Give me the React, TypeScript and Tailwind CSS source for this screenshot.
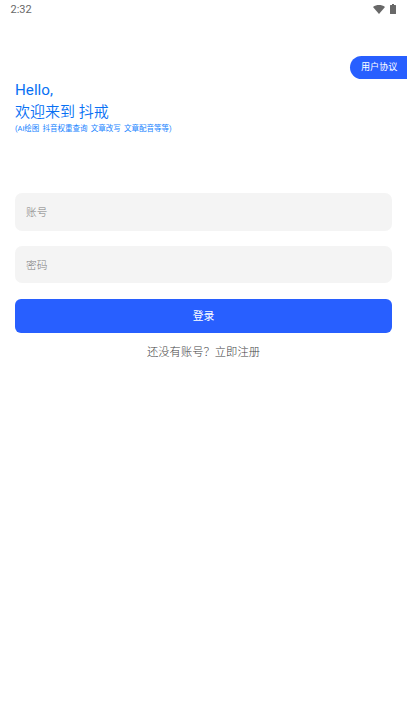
import React from "react";

function StatusBar() {
  return (
    <header className="flex h-[18px] items-center justify-between pl-[10.5px] pr-[11px] text-[#686868]">
      <span className="pt-[1px] font-['Roboto',sans-serif] text-[11px] leading-[18px]">2:32</span>
      <div className="flex items-center gap-[5px]">
        <svg className="h-[9px] w-3" viewBox="0 0 12 9" fill="currentColor" aria-hidden="true">
          <path d="M0 2C3.5-.6 8.5-.6 12 2L6 9Z" />
        </svg>
        <svg className="h-[10px] w-[6px]" viewBox="0 0 6 10" fill="currentColor" aria-hidden="true">
          <path d="M2 0H4V1H5.5Q6 1 6 1.5V9.5Q6 10 5.5 10H.5Q0 10 0 9.5V1.5Q0 1 .5 1H2Z" />
        </svg>
      </div>
    </header>
  );
}

function Field({ label, type }: { label: string; type: string }) {
  return (
    <input
      type={type}
      placeholder={label}
      aria-label={label}
      className="block h-[37.5px] w-full rounded-[7px] bg-[#f4f4f4] px-[11px] pt-[2px] text-[10.7px] font-light outline-none placeholder:text-[#7c7c7c]"
    />
  );
}

export default function App() {
  return (
    <div className="min-h-screen bg-white font-['Roboto','Noto_Sans_CJK_SC',sans-serif]" lang="zh-CN">
      <StatusBar />
      <div className="flex justify-end pt-[38px]">
        <button className="h-[22.5px] w-[57.5px] rounded-l-full bg-[#285fff] pl-[11.5px] text-left text-[9.1px] leading-[22px] text-white">
          用户协议
        </button>
      </div>
      <main className="px-[15px]">
        <h1 className="pt-[1.5px] text-[15px] leading-[21px] text-[#0870f4]">
          <span className="block text-[15.2px]">Hello,</span>
          <span className="block whitespace-nowrap pt-[1px] font-[350]">欢迎来到 抖戒</span>
        </h1>
        <p className="whitespace-nowrap text-[7.5px] leading-[12px] text-[#1683ff] [word-spacing:1.4px]">
          (Ai绘图 抖音权重查询 文章改写 文章配音等等)
        </p>
        <form className="mt-[58px] flex flex-col gap-[15px]" onSubmit={(e) => e.preventDefault()}>
          <Field label="账号" type="text" />
          <Field label="密码" type="password" />
          <button className="mt-[0.5px] h-[34px] rounded-[6px] bg-[#285fff] pt-[2px] text-[10.8px] leading-[32px] text-white">登录</button>
        </form>
        <p className="mt-[11.5px] text-center text-[11.3px] font-light leading-[17px] text-[#444444]">还没有账号？立即注册</p>
      </main>
    </div>
  );
}
